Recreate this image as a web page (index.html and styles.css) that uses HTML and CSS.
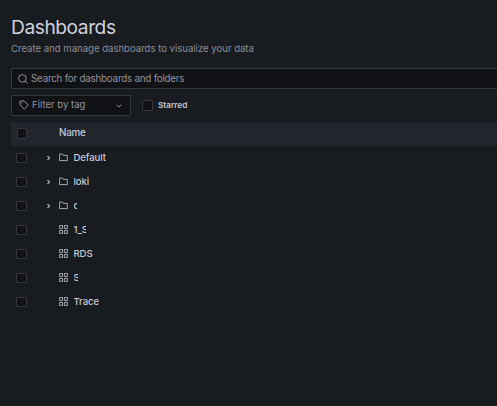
FILE: index.html
```html
<!DOCTYPE html>
<html lang="en">
<head>
<meta charset="utf-8">
<title>Dashboards</title>
<link rel="stylesheet" href="styles.css">
</head>
<body>
<svg class="defs" width="0" height="0">
  <symbol id="folder" viewBox="0 0 9 9"><path d="M.6 1h2.7l.8 1.4h4.2v5.2H.6z"/></symbol>
  <symbol id="apps" viewBox="0 0 9 9"><path d="M.6.6h3v3h-3zM5.4.6h3v3h-3zM.6 5.4h3v3h-3zM5.4 5.4h3v3h-3z"/></symbol>
  <symbol id="angle" viewBox="0 0 5 6"><path d="M1.4.8l2.2 2.2-2.2 2.2"/></symbol>
</svg>
<main class="page">
  <h1 class="title">Dashboards</h1>
  <p class="subtitle">Create and manage dashboards to visualize your data</p>
  <div class="field search">
    <svg class="search-icon" viewBox="0 0 10 10"><circle cx="4.4" cy="4.4" r="3.8"/><path d="M7.2 7.2l2.3 2.3"/></svg>
    <span class="search-text">Search for dashboards and folders</span>
  </div>
  <div class="filters">
    <div class="field tag-filter">
      <svg class="tag-icon" viewBox="0 0 10 10"><path d="M1 1.3L5 .8l4.2 4.3L5.3 9.1 1 4.9z"/><path d="M3 2.7v.8"/></svg>
      <span class="tag-text">Filter by tag</span>
      <svg class="down-icon" viewBox="0 0 6 4"><path d="M.8.8L3 3 5.2.8"/></svg>
    </div>
    <span class="check"></span><span class="starred">Starred</span>
  </div>
  <div class="table">
    <div class="row head"><span class="check"></span><span class="head-name">Name</span></div>
    <div class="row"><span class="check"></span><svg class="angle"><use href="#angle"/></svg><svg class="icon"><use href="#folder"/></svg><span class="name">Default</span></div>
    <div class="row"><span class="check"></span><svg class="angle"><use href="#angle"/></svg><svg class="icon"><use href="#folder"/></svg><span class="name">loki</span></div>
    <div class="row"><span class="check"></span><svg class="angle"><use href="#angle"/></svg><svg class="icon"><use href="#folder"/></svg><span class="name cut-c">c</span></div>
    <div class="row"><span class="check"></span><span class="angle"></span><svg class="icon"><use href="#apps"/></svg><span class="name cut-1s">1_S</span></div>
    <div class="row"><span class="check"></span><span class="angle"></span><svg class="icon"><use href="#apps"/></svg><span class="name">RDS</span></div>
    <div class="row"><span class="check"></span><span class="angle"></span><svg class="icon"><use href="#apps"/></svg><span class="name cut-s">S</span></div>
    <div class="row"><span class="check"></span><span class="angle"></span><svg class="icon"><use href="#apps"/></svg><span class="name">Trace</span></div>
  </div>
</main>
</body>
</html>
```
FILE: styles.css
```css
* { box-sizing: border-box; }
body {
  margin: 0;
  background: #181b1f;
  color: #c8c9d6;
  font-family: Inter, "Liberation Sans", sans-serif;
  overflow: hidden;
}
svg { fill: none; stroke: #b4b5c0; stroke-width: .9; flex: none; }
.defs { position: absolute; }
.page { padding: 14px 0 0 11px; }
.title { margin: 0; font-size: 19.2px; line-height: 26px; font-weight: 400; color: #d0d1de; letter-spacing: -.45px; }
.subtitle { margin: 2px 0 0; font-size: 9.6px; line-height: 14px; color: #8d8e9a; letter-spacing: -.02px; }
.field { display: flex; align-items: center; height: 21px; background: #111216; border: 1px solid #36373c; border-radius: 1px; color: #92939e; }
.field svg { stroke: #a0a1ac; }
.search { margin-top: 12px; border-right: 0; border-radius: 1px 0 0 1px; padding-left: 6px; }
.search-icon { width: 10px; height: 10px; margin-right: 3px; }
.search-text { font-size: 9.8px; line-height: 14px; white-space: nowrap; letter-spacing: -.22px; }
.tag-text { font-size: 9.6px; line-height: 14px; white-space: nowrap; letter-spacing: -.02px; }
.filters { display: flex; align-items: center; margin-top: 6px; }
.tag-filter { width: 120px; padding: 0 8px 2px 7px; margin-right: 11px; }
.tag-icon { width: 10px; height: 10px; margin: 1px 3px 0 0; }
.down-icon { width: 6px; height: 4px; margin-left: auto; margin-top: 3px; }
.check { flex: none; width: 11px; height: 11px; background: #111216; border: 1px solid #36373c; border-radius: 1px; }
.starred { margin: -1px 0 0 5px; font-size: 8.2px; line-height: 12px; font-weight: 600; }
.table { margin-top: 6px; }
.row { display: flex; align-items: center; height: 24px; padding-left: 5px; }
.row .check { height: 10px; margin-top: -1px; }
.head { background: #22252b; padding-left: 6px; }
.head .check { width: 10px; height: 11px; }
.head-name { margin: -2px 0 0 32px; font-size: 9.8px; line-height: 14px; font-weight: 500; letter-spacing: -.2px; }
.angle { flex: none; width: 5px; height: 6px; margin: 0 8px 0 19px; stroke-width: 1.1; }
.icon { width: 9px; height: 9px; margin: -1px 5.5px 0 0; }
.name { font-size: 9.6px; line-height: 14px; font-weight: 500; white-space: nowrap; overflow: hidden; letter-spacing: -.1px; }
.cut-c { width: 3px; }
.cut-1s { width: 12px; }
.cut-s { width: 4px; }
```
